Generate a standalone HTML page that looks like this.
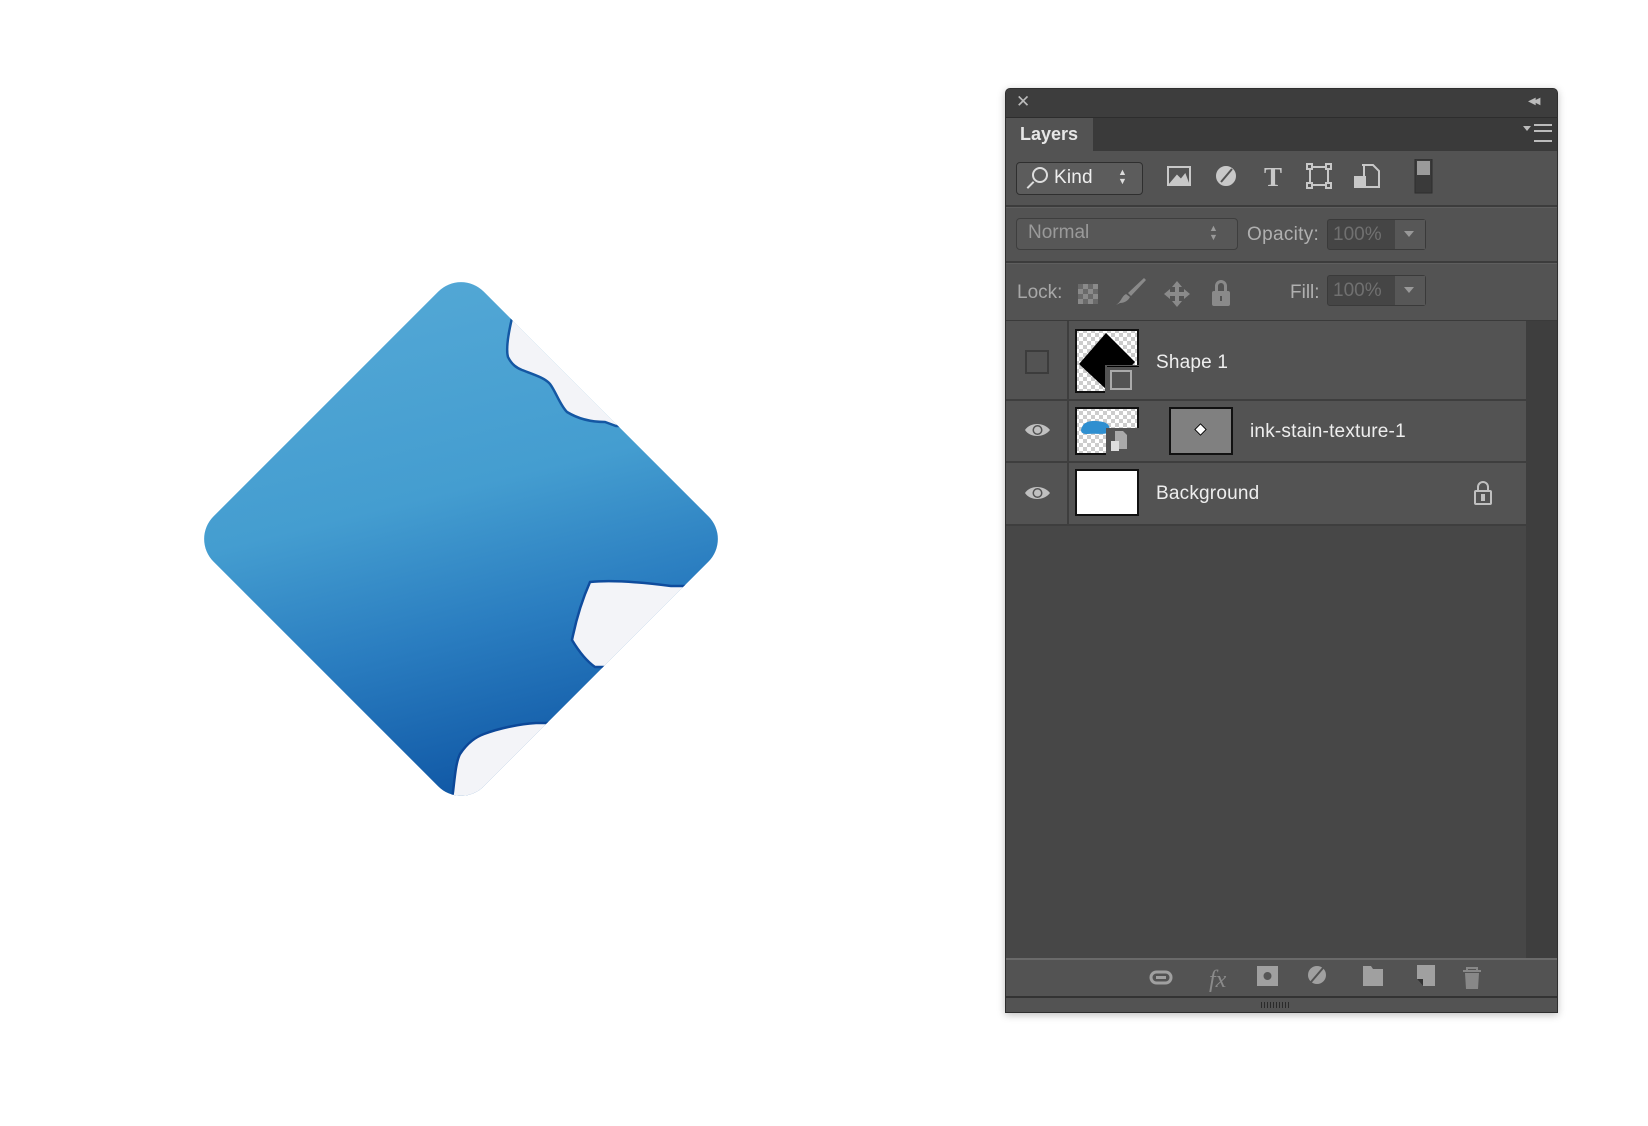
<!DOCTYPE html>
<html><head><meta charset="utf-8"><style>
body{margin:0;width:1648px;height:1126px;background:#fff;position:relative;overflow:hidden;font-family:"Liberation Sans",sans-serif}
.a{position:absolute}
.t{color:#eee;font-size:19px;letter-spacing:0.2px}
.g{color:#9a9a9a;font-size:19px}
.box{background:#454545;border:1px solid #3a3a3a;border-radius:3px}
</style></head><body>
<svg class="a" style="left:0;top:0" width="800" height="830">
<defs>
<clipPath id="c"><rect x="-191" y="-191" width="382" height="382" rx="32" transform="translate(461,539) rotate(45)"/></clipPath>
<linearGradient id="lg" x1="0.2" y1="0" x2="0.45" y2="1">
<stop offset="0" stop-color="#55a9d6"/><stop offset="0.45" stop-color="#449dd0"/><stop offset="0.7" stop-color="#2a7dc0"/><stop offset="1" stop-color="#0f56a4"/></linearGradient>
</defs>
<g clip-path="url(#c)">
<rect x="195" y="270" width="540" height="540" fill="url(#lg)"/>
<path d="M512,300 L512,318 C508,335 506,350 508,357 C512,365 517,368 522,370 C535,375 545,378 550,384 C556,392 560,405 567,412 C580,420 595,422 605,422 L616,426 L740,426 L740,290Z" fill="#f3f4f8" stroke="#1457a3" stroke-width="2.5"/>
<path d="M740,586 L671,586 C640,582 610,580 590,582 C582,600 576,620 572,640 C578,650 585,660 595,667 L740,667Z" fill="#f3f4f8" stroke="#0f4c9d" stroke-width="2.5"/>
<path d="M450,810 L453,792 C455,775 456,762 460,754 C468,742 476,737 484,734 C500,728 520,724 536,723 L580,723 L580,810Z" fill="#f3f4f8" stroke="#0c4898" stroke-width="2.5"/>
</g>
</svg>

<div class="a" style="left:1005px;top:88px;width:551px;height:923px;background:#535353;border:1px solid #2e2e2e;border-radius:5px 5px 0 0;box-shadow:0 2px 8px rgba(0,0,0,.25);overflow:hidden">
 <div class="a" style="left:0;top:0;width:551px;height:28px;background:#3d3d3d;border-bottom:1px solid #2d2d2d"></div>
 <div class="a" style="left:10px;top:3px;color:#bbb;font-size:17px">✕</div>
 <div class="a" style="left:522px;top:7px;color:#bbb;font-size:10px;letter-spacing:-3px">◀◀</div>
 <div class="a" style="left:0;top:29px;width:551px;height:33px;background:#3a3a3a"></div>
 <div class="a" style="left:0;top:29px;width:87px;height:34px;background:#535353"></div>
 <div class="a" style="left:14px;top:35px;color:#e6e6e6;font-size:18px;font-weight:bold">Layers</div>
 <div class="a" style="left:528px;top:35px;width:18px;height:14px;border-top:2px solid #bbb;border-bottom:2px solid #bbb"></div>
 <div class="a" style="left:528px;top:41px;width:18px;border-top:2px solid #bbb"></div>
 <div class="a" style="left:517px;top:37px;width:0;height:0;border:4px solid transparent;border-top:5px solid #bbb"></div>
 <div class="a" style="left:10px;top:73px;width:125px;height:31px;background:#5c5c5c;border:1px solid #2f2f2f;border-radius:4px"></div>
 <div class="a" style="left:26px;top:78px;width:12px;height:12px;border:2px solid #ddd;border-radius:50%"></div>
 <div class="a" style="left:20px;top:95px;width:9px;border-top:2px solid #ddd;transform:rotate(-45deg)"></div>
 <div class="a t" style="left:48px;top:78px">Kind</div>
 <div class="a" style="left:112px;top:79px;color:#ddd;font-size:9px;line-height:9px">▲<br>▼</div>
 <svg class="a" style="left:160px;top:70px" width="280" height="40" fill="none" stroke="#c8c8c8" stroke-width="2">
  <rect x="2" y="8" width="22" height="18"/><path d="M5,24 L11,17 L15,21 L19,16 L22,24Z" fill="#c8c8c8"/>
  <circle cx="60" cy="17" r="9" fill="#c8c8c8"/><path d="M55,23 L66,10" stroke="#535353" stroke-width="2"/>
  <text x="98" y="27" font-family="Liberation Serif" font-size="27" font-weight="bold" fill="#c8c8c8" stroke="none">T</text>
  <rect x="144" y="8" width="18" height="18"/><rect x="141" y="5" width="5" height="5" fill="#535353"/><rect x="160" y="5" width="5" height="5" fill="#535353"/><rect x="141" y="24" width="5" height="5" fill="#535353"/><rect x="160" y="24" width="5" height="5" fill="#535353"/>
  <path d="M196,6 L207,6 L213,12 L213,28 L198,28 L198,6" /><rect x="188" y="17" width="12" height="12" fill="#c8c8c8" stroke="none"/>
  <rect x="249" y="0" width="17" height="34" fill="#3a3a3a" stroke="#2e2e2e" stroke-width="1"/><rect x="251" y="2" width="13" height="14" fill="#9a9a9a" stroke="none"/>
 </svg>
 <div class="a" style="left:0;top:116px;width:551px;height:2px;background:#3c3c3c;border-bottom:1px solid #5e5e5e"></div>
 <div class="a" style="left:10px;top:129px;width:220px;height:30px;background:#575757;border:1px solid #3e3e3e;border-radius:4px"></div>
 <div class="a g" style="left:22px;top:133px">Normal</div>
 <div class="a" style="left:203px;top:135px;color:#9a9a9a;font-size:9px;line-height:9px">▲<br>▼</div>
 <div class="a g" style="left:241px;top:135px;color:#b0b0b0;letter-spacing:0.3px">Opacity:</div>
 <div class="a box" style="left:321px;top:130px;width:97px;height:29px"></div>
 <div class="a" style="left:389px;top:131px;width:30px;height:29px;background:#575757"></div>
 <div class="a" style="left:398px;top:142px;border:5px solid transparent;border-top:6px solid #999"></div>
 <div class="a g" style="left:327px;top:135px;color:#707070">100%</div>
 <div class="a" style="left:0;top:172px;width:551px;height:2px;background:#3c3c3c;border-bottom:1px solid #5e5e5e"></div>
 <div class="a g" style="left:11px;top:193px;color:#a8a8a8">Lock:</div>
 <div class="a" style="left:72px;top:195px;width:20px;height:20px;background:repeating-conic-gradient(#8a8a8a 0 25%,#6a6a6a 0 50%) 0 0/10px 10px"></div>
 <svg class="a" style="left:110px;top:188px" width="140" height="34" fill="#8a8a8a">
  <path d="M4,26 C8,26 12,24 14,20 L10,17 C5,20 6,24 0,28 Z M12,16 L15,19 L30,3 L28,1Z"/>
  <path d="M61,4 L66,10 L63,10 L63,15 L68,15 L68,12 L74,17 L68,22 L68,19 L63,19 L63,24 L66,24 L61,30 L56,24 L59,24 L59,19 L54,19 L54,22 L48,17 L54,12 L54,15 L59,15 L59,10 L56,10Z"/>
  <path d="M99,14 L99,9 A6,6 0 0 1 111,9 L111,14 L108,14 L108,9 A3,3 0 0 0 102,9 L102,14Z"/><rect x="96" y="14" width="18" height="15" rx="2"/><rect x="104" y="19" width="2" height="5" fill="#535353"/>
 </svg>
 <div class="a g" style="left:284px;top:193px;color:#b0b0b0">Fill:</div>
 <div class="a box" style="left:321px;top:186px;width:97px;height:29px"></div>
 <div class="a" style="left:389px;top:187px;width:30px;height:29px;background:#575757"></div>
 <div class="a" style="left:398px;top:198px;border:5px solid transparent;border-top:6px solid #999"></div>
 <div class="a g" style="left:327px;top:191px;color:#707070">100%</div>
 <div class="a" style="left:0;top:231px;width:551px;height:638px;background:#474747;border-top:1px solid #3a3a3a"></div>
 <div class="a" style="left:520px;top:232px;width:31px;height:637px;background:#3e3e3e"></div>
 <div class="a" style="left:0;top:232px;width:520px;height:78px;background:#535353;border-bottom:2px solid #3e3e3e"></div>
 <div class="a" style="left:0;top:312px;width:520px;height:60px;background:#535353;border-bottom:2px solid #3e3e3e"></div>
 <div class="a" style="left:0;top:374px;width:520px;height:61px;background:#535353;border-bottom:2px solid #3e3e3e"></div>
 <div class="a" style="left:61px;top:232px;width:2px;height:205px;background:#3e3e3e"></div>
 <div class="a" style="left:19px;top:261px;width:20px;height:20px;border:2px solid #3c3c3c"></div>
 <svg class="a" style="left:18px;top:333px" width="28" height="80"><g fill="#c0c0c0"><path d="M1,8 C6,0 20,0 26,8 C20,16 6,16 1,8Z"/><circle cx="13.5" cy="8" r="5" fill="#535353"/><circle cx="13.5" cy="8" r="3.5" fill="#c0c0c0"/></g><g transform="translate(0,63)" fill="#c0c0c0"><path d="M1,8 C6,0 20,0 26,8 C20,16 6,16 1,8Z"/><circle cx="13.5" cy="8" r="5" fill="#535353"/><circle cx="13.5" cy="8" r="3.5" fill="#c0c0c0"/></g></svg>
 <svg class="a" style="left:69px;top:240px" width="64" height="64"><defs><pattern id="ck" width="8" height="8" patternUnits="userSpaceOnUse"><rect width="8" height="8" fill="#fff"/><rect width="4" height="4" fill="#ccc"/><rect x="4" y="4" width="4" height="4" fill="#ccc"/></pattern></defs>
  <rect x="1" y="1" width="62" height="62" fill="url(#ck)" stroke="#111" stroke-width="2"/><path d="M31,4 L60,33 L33,62 L4,35Z" fill="#000"/><rect x="30" y="36" width="34" height="28" fill="#535353"/><rect x="32" y="37" width="32" height="1" fill="#000"/><rect x="36" y="42" width="20" height="18" fill="none" stroke="#aaa" stroke-width="2"/></svg>
 <div class="a t" style="left:150px;top:263px">Shape 1</div>
 <svg class="a" style="left:69px;top:318px" width="64" height="48"><rect x="1" y="1" width="62" height="46" fill="url(#ck)" stroke="#111" stroke-width="2"/><path d="M7,20 C10,13 20,13 28,15 C34,16 37,22 32,26 C28,28 20,26 12,27 C6,27 5,24 7,20Z" fill="#2f8fd0"/><rect x="31" y="21" width="33" height="27" fill="#535353"/><path d="M40,24 L48,24 L52,28 L52,42 L40,42Z" fill="#aaa"/><rect x="36" y="34" width="8" height="10" fill="#ddd"/></svg>
 <div class="a" style="left:163px;top:318px;width:60px;height:44px;background:#808080;border:2px solid #111"></div>
 <div class="a" style="left:190px;top:336px;width:7px;height:7px;background:#fff;border:1px solid #000;transform:rotate(45deg)"></div>
 <div class="a t" style="left:244px;top:332px">ink-stain-texture-1</div>
 <div class="a" style="left:69px;top:380px;width:60px;height:43px;background:#fff;border:2px solid #111"></div>
 <div class="a t" style="left:150px;top:394px">Background</div>
 <svg class="a" style="left:466px;top:391px" width="22" height="26" fill="none" stroke="#c0c0c0" stroke-width="2"><path d="M6,11 L6,7 A5,5 0 0 1 16,7 L16,11"/><rect x="3" y="11" width="16" height="13" rx="1"/><rect x="10" y="15" width="2" height="5" fill="#c0c0c0"/></svg>
 <div class="a" style="left:0;top:869px;width:551px;height:36px;background:#535353;border-top:2px solid #6a6a6a;border-bottom:3px solid #333"></div>
 <div class="a" style="left:0;top:909px;width:551px;height:14px;background:#535353"></div>
 <div class="a" style="left:255px;top:913px;width:30px;height:6px;background:repeating-linear-gradient(90deg,#2a2a2a 0 1px,transparent 1px 3px)"></div>
 <svg class="a" style="left:143px;top:870px" width="411" height="38" fill="#a0a0a0">
  <rect x="2" y="13" width="20" height="11" rx="5.5" fill="none" stroke="#a0a0a0" stroke-width="3"/><rect x="7" y="17" width="10" height="3"/>
  <text x="60" y="28" font-family="Liberation Serif" font-style="italic" font-size="24" fill="#8a8a8a">fx</text>
  <rect x="108" y="7" width="21" height="20"/><circle cx="118.5" cy="17" r="4" fill="#555"/>
  <circle cx="168" cy="16" r="9"/><path d="M162,23 L174,9" stroke="#535353" stroke-width="2"/>
  <path d="M214,7 L222,7 L224,10 L234,10 L234,27 L214,27Z"/>
  <path d="M268,6 L286,6 L286,27 L274,27 L268,20Z"/><path d="M268,20 L274,27 L274,20Z" fill="#333"/>
  <path d="M314,12 L332,12 M318,12 L318,9 L328,9 L328,12" stroke="#888" stroke-width="2" fill="none"/><path d="M316,14 L330,14 L329,30 L317,30Z" fill="#888"/>
 </svg>
</div>
</body></html>
